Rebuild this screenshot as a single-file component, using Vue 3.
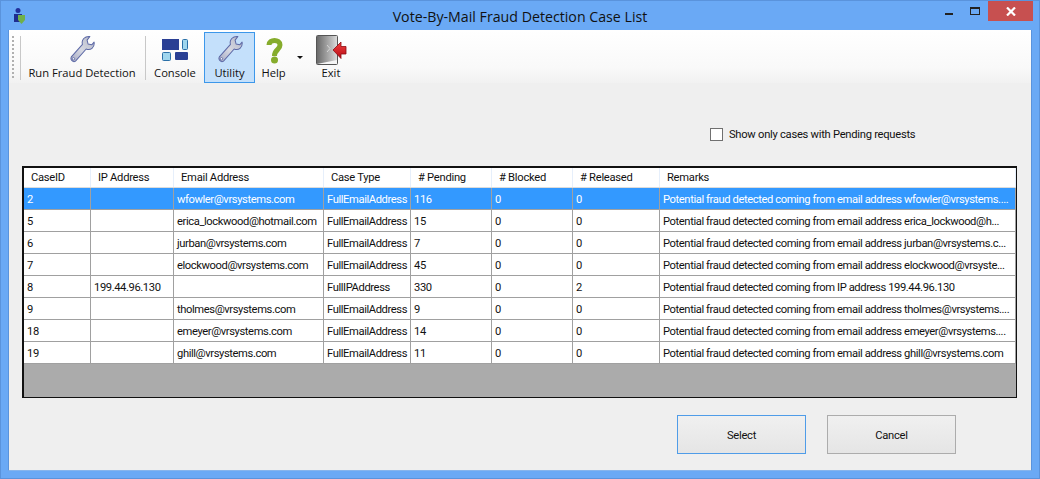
<script setup>
const cols = ['CaseID','IP Address','Email Address','Case Type','# Pending','# Blocked','# Released','Remarks']
const pre = 'Potential fraud detected coming from '
const rows = [
 ['2','','wfowler@vrsystems.com','FullEmailAddress','116','0','0',pre+'email address wfowler@vrsystems....'],
 ['5','','erica_lockwood@hotmail.com','FullEmailAddress','15','0','0',pre+'email address erica_lockwood@h...'],
 ['6','','jurban@vrsystems.com','FullEmailAddress','7','0','0',pre+'email address jurban@vrsystems.c...'],
 ['7','','elockwood@vrsystems.com','FullEmailAddress','45','0','0',pre+'email address elockwood@vrsyste...'],
 ['8','199.44.96.130','','FullIPAddress','330','0','2',pre+'IP address 199.44.96.130'],
 ['9','','tholmes@vrsystems.com','FullEmailAddress','9','0','0',pre+'email address tholmes@vrsystems....'],
 ['18','','emeyer@vrsystems.com','FullEmailAddress','14','0','0',pre+'email address emeyer@vrsystems....'],
 ['19','','ghill@vrsystems.com','FullEmailAddress','11','0','0',pre+'email address ghill@vrsystems.com'],
]
</script>

<template>
  <div class="window">
    <header class="titlebar">
      <svg class="appicon" width="16" height="18" viewBox="0 0 16 18">
        <circle cx="5" cy="3.500" r="2.500" fill="#22309a"/>
        <path d="M1 7h8v8H1z" fill="#1f2d8f"/>
        <path d="M5 8h7v5l-3.500 4L5 13z" fill="#6fb04a"/>
      </svg>
      <div class="title">Vote-By-Mail Fraud Detection Case List</div>
      <div class="controls">
        <span class="ctl"><i class="min"></i></span>
        <span class="ctl"><i class="max"></i></span>
        <span class="close">
          <svg width="10" height="9" viewBox="0 0 10 9"><path d="M1 .5l8 8M9 .5l-8 8" stroke="#fff" stroke-width="2.200" fill="none"/></svg>
        </span>
      </div>
    </header>
    <main class="client">
      <svg width="0" height="0" class="defs">
        <defs>
          <linearGradient id="steel" x1="0" y1="1" x2="1" y2="0">
            <stop offset="0" stop-color="#a3a7c2"/><stop offset=".45" stop-color="#d6d8e2"/><stop offset="1" stop-color="#b4b7c6"/>
          </linearGradient>
          <symbol id="wrench" viewBox="0 0 28 30">
            <path d="M2.500 23.500L14.500 10C13 5 17 1 22.500 1.500L19.500 5.500l1 4 4 1L27 7.500c1 6-4 9.500-8.500 7.500L7 28c-2.500 2-6-1.500-4.500-4.500z" fill="url(#steel)" stroke="#5d69a6" stroke-width="1.100" stroke-linejoin="round"/>
            <circle cx="4.800" cy="25.500" r="1.300" fill="#f4f4f8" stroke="#4f5c9c" stroke-width=".8"/>
          </symbol>
        </defs>
      </svg>
      <nav class="toolbar">
        <span class="grip"></span>
        <span class="sep"></span>
        <button class="tool w-run">
          <svg width="28" height="33" viewBox="0 0 28 33"><use href="#wrench" x="1" y="2" width="26" height="28"/></svg>
          <span>Run Fraud Detection</span>
        </button>
        <span class="sep"></span>
        <button class="tool w-console">
          <svg width="32" height="33" viewBox="0 0 32 33">
            <rect x="3" y="6" width="17" height="11" fill="#2a3f94"/>
            <rect x="23.500" y="6.500" width="5" height="10" rx="1" fill="#9fd6ee" stroke="#2a70a8"/>
            <rect x="3.500" y="19.500" width="8" height="8" rx="1" fill="#9fd6ee" stroke="#2a70a8"/>
            <rect x="16" y="19" width="13" height="8" rx="1" fill="#2a3f94"/>
          </svg>
          <span>Console</span>
        </button>
        <button class="tool w-util active">
          <svg width="28" height="33" viewBox="0 0 28 33"><use href="#wrench" x="1" y="2" width="26" height="28"/></svg>
          <span>Utility</span>
        </button>
        <button class="tool w-help">
          <svg width="24" height="33" viewBox="0 0 24 33">
            <path d="M7 12C7 6 18 6 18 12C18 17 12.500 16.500 12.500 23" fill="none" stroke="#86ac2c" stroke-width="5"/>
            <circle cx="12.500" cy="27" r="3.500" fill="#86ac2c"/>
          </svg>
          <span>Help</span>
        </button>
        <i class="caret"></i>
        <button class="tool w-exit">
          <svg width="34" height="33" viewBox="0 0 34 33">
            <defs>
              <linearGradient id="door" x1="0" x2="1"><stop offset="0" stop-color="#6a6a6a"/><stop offset=".75" stop-color="#bcbcbc"/><stop offset="1" stop-color="#dcdcdc"/></linearGradient>
              <linearGradient id="arrow" x1="0" y1="0" x2="0" y2="1"><stop offset="0" stop-color="#f04040"/><stop offset="1" stop-color="#b80c14"/></linearGradient>
            </defs>
            <rect x="2.500" y="2.500" width="21" height="29" rx="1" fill="#f6f6f6" stroke="#555"/>
            <path d="M3 3h20v24L3 31z" fill="url(#door)"/>
            <path d="M13 12l3 3.500-3 3.500" fill="none" stroke="#d5d5d5"/>
            <path d="M19 17l8-8v4.500h5v7.500h-5v4.500z" fill="url(#arrow)" stroke="#8d0b12" stroke-width=".8" stroke-linejoin="round"/>
          </svg>
          <span>Exit</span>
        </button>
      </nav>
      <div class="filter">
        <label class="check"><i class="box"></i><span>Show only cases with Pending requests</span></label>
      </div>
      <section class="grid">
        <div class="row head"><div v-for="c in cols" :key="c" class="cell">{{ c }}</div></div>
        <div v-for="(r, i) in rows" :key="i" class="row" :class="{ sel: i === 0 }">
          <div v-for="(v, j) in r" :key="j" class="cell">{{ v }}</div>
        </div>
      </section>
      <footer class="actions">
        <button class="btn primary">Select</button>
        <button class="btn">Cancel</button>
      </footer>
    </main>
  </div>
</template>

<style>
html, body { margin: 0; background: #6aa8f5; }
</style>

<style scoped>
* { box-sizing: border-box; }
.window { width: 1040px; height: 479px; background: #6aa9f5; border: 1px solid #5a93dc; padding: 0 7px 7px; display: flex; flex-direction: column; font-family: Roboto, "Liberation Sans", sans-serif; font-size: 11.200px; letter-spacing: -0.27px; color: #111; overflow: hidden; }
.titlebar { height: 29px; flex: none; display: flex; align-items: center; position: relative; }
.appicon { margin: 1px 0 0 5px; }
.title { position: absolute; left: 0; right: 0; top: 7px; text-align: center; font-family: "Open Sans", sans-serif; font-size: 14.200px; letter-spacing: 0; line-height: 18px; color: #111; }
.controls { margin-left: auto; display: flex; align-self: flex-start; margin-right: -1px; position: relative; }
.ctl { width: 26px; height: 20px; display: flex; align-items: center; justify-content: center; }
.min { width: 8px; height: 2px; background: #222; margin-top: 6px; }
.max { width: 10px; height: 8px; border: 1px solid #222; border-top-width: 2px; }
.close { width: 45px; height: 20px; background: #c75050; display: flex; align-items: center; justify-content: center; }
.client { flex: 1; background: #efefef; border: 1px solid #5a93dc; border-bottom-color: #86b4ec; border-top: 0; display: flex; flex-direction: column; min-height: 0; }
.toolbar { height: 53px; flex: none; background: linear-gradient(#fff, #f9f9f9 70%, #f1f1f1); display: flex; align-items: flex-start; padding: 2px 0 0 2px; font-family: "Open Sans", sans-serif; font-size: 11.200px; letter-spacing: 0; }
.grip { width: 4px; height: 44px; margin: 3px 5px 0 0; background-image: radial-gradient(circle, #b0b0b0 1px, transparent 1.200px); background-size: 4px 4px; }
.sep { width: 1px; height: 44px; margin-top: 4px; background: #c8c8c8; flex: none; }
.tool { flex: none; height: 51px; padding: 0; border: 1px solid transparent; background: none; font: inherit; letter-spacing: inherit; color: #111; display: flex; flex-direction: column; align-items: center; }
.tool svg { height: 33px; flex: none; display: block; }
.tool span { line-height: 15px; margin-top: -1px; white-space: nowrap; }
.w-run { width: 124px; padding-right: 2px; }
.w-console { width: 58px; }
.w-util { width: 51px; }
.w-help { width: 37px; }
.w-exit { width: 60px; margin-left: -2px; }
.active { background: #c4e0fb; border-color: #3c97ea; }
.caret { width: 0; height: 0; border: 3px solid transparent; border-top: 3px solid #111; border-bottom: 0; margin: 24px 0 0 5px; flex: none; }
.defs { position: absolute; }
.filter { height: 83px; flex: none; padding: 44px 0 0 701px; }
.check { display: flex; align-items: center; gap: 6px; line-height: 15px; }
.box { width: 13px; height: 13px; background: #fff; border: 1px solid #707070; }
.grid { margin-left: 13px; width: 995px; height: 232px; flex: none; background: #ababab; border: solid #111; border-width: 2px 1px 1px 2px; }
.row { display: grid; grid-template-columns: 67px 83px 150px 87px 81px 81px 87px 356px; height: 22px; background: #fff; border-bottom: 1px solid #a0a0a0; }
.cell { padding: 1px 2px 0 3px; line-height: 21px; letter-spacing: -0.4px; border-right: 1px solid #a0a0a0; white-space: nowrap; overflow: hidden; }
.head { height: 20px; background: #fff; border-bottom-color: #dcdcdc; }
.head .cell { border-right: 1px solid #e6effb; padding: 0 2px 0 7px; line-height: 19px; letter-spacing: -0.27px; }
.sel { background: #3399ff; color: #fff; }
.actions { display: flex; gap: 21px; padding: 17px 0 0 668px; }
.btn { width: 129px; height: 39px; padding: 2px 0 0; background: linear-gradient(#f0f0f0, #e5e5e5); border: 1px solid #acacac; font: inherit; letter-spacing: inherit; color: #111; }
.primary { border-color: #4f9ce8; }
</style>
